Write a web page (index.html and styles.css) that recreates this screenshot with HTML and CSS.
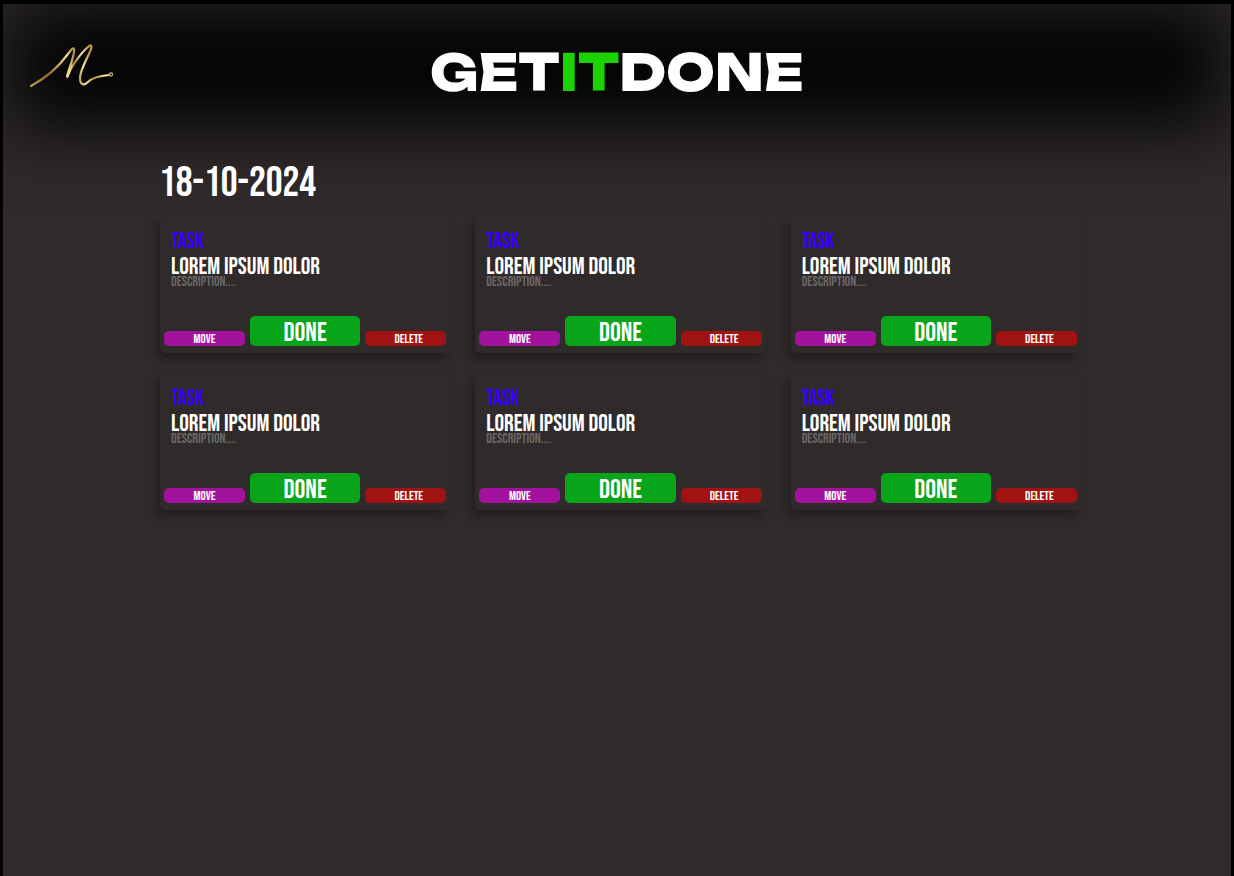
FILE: index.html
```html
<!DOCTYPE html>
<html lang="en">
<head>
<meta charset="utf-8">
<meta name="viewport" content="width=device-width, initial-scale=1">
<title>GetItDone</title>
<link rel="stylesheet" href="styles.css">
</head>
<body>
<div class="page">
  <header class="header">
    <a class="logo" href="#" aria-label="Home">
      <svg class="logo-mark" viewBox="0 0 84 44" fill="none" aria-hidden="true">
        <defs>
          <linearGradient id="gold" gradientUnits="userSpaceOnUse" x1="0" y1="42" x2="84" y2="30">
            <stop offset="0" stop-color="#c59b4f"/>
            <stop offset=".24" stop-color="#94692a"/>
            <stop offset=".48" stop-color="#f3df93"/>
            <stop offset=".56" stop-color="#b28a42"/>
            <stop offset=".66" stop-color="#f5e59b"/>
            <stop offset=".76" stop-color="#b99047"/>
            <stop offset=".9" stop-color="#f5e7a4"/>
            <stop offset="1" stop-color="#c7a860"/>
          </linearGradient>
        </defs>
        <g stroke="url(#gold)" stroke-width="2.200" stroke-linecap="round" stroke-linejoin="round">
          <path d="M1 42C14 35 27 25 38 10C41 6 43 3 44 5C45 11 39 25 37 32C37 34 38 32 39 29C42 21 52 8 58 3C61 0 62 2 61 5C58 14 50 25 50 34C50 41 54 42 58 38C62 34 67 32 79 31"/>
          <circle cx="81" cy="30.500" r="1.600" stroke-width="1.100"/>
        </g>
      </svg>
    </a>
    <h1 class="brand">GET<span class="brand-accent">IT</span>DONE</h1>
  </header>
  <main class="board">
    <h2 class="date">18-10-2024</h2>
    <div class="tasks">
      <article class="card"><p class="kind">TASK</p><h3 class="name">LOREM IPSUM DOLOR</h3><p class="description">DESCRIPTION....</p><div class="actions"><button class="button move">MOVE</button><button class="button done">DONE</button><button class="button delete">DELETE</button></div></article>
      <article class="card"><p class="kind">TASK</p><h3 class="name">LOREM IPSUM DOLOR</h3><p class="description">DESCRIPTION....</p><div class="actions"><button class="button move">MOVE</button><button class="button done">DONE</button><button class="button delete">DELETE</button></div></article>
      <article class="card"><p class="kind">TASK</p><h3 class="name">LOREM IPSUM DOLOR</h3><p class="description">DESCRIPTION....</p><div class="actions"><button class="button move">MOVE</button><button class="button done">DONE</button><button class="button delete">DELETE</button></div></article>
      <article class="card"><p class="kind">TASK</p><h3 class="name">LOREM IPSUM DOLOR</h3><p class="description">DESCRIPTION....</p><div class="actions"><button class="button move">MOVE</button><button class="button done">DONE</button><button class="button delete">DELETE</button></div></article>
      <article class="card"><p class="kind">TASK</p><h3 class="name">LOREM IPSUM DOLOR</h3><p class="description">DESCRIPTION....</p><div class="actions"><button class="button move">MOVE</button><button class="button done">DONE</button><button class="button delete">DELETE</button></div></article>
      <article class="card"><p class="kind">TASK</p><h3 class="name">LOREM IPSUM DOLOR</h3><p class="description">DESCRIPTION....</p><div class="actions"><button class="button move">MOVE</button><button class="button done">DONE</button><button class="button delete">DELETE</button></div></article>
    </div>
  </main>
</div>
</body>
</html>
```
FILE: styles.css
```css
* {
  box-sizing: border-box;
}

body {
  margin: 0;
  background: #000;
  color: #fff;
  font-family: "Bebas Neue", "Roboto Condensed", "Liberation Sans Narrow", "Liberation Sans", sans-serif;
}

h1, h2, h3, p {
  margin: 0;
}

.page {
  position: relative;
  min-height: 100vh;
  border: solid #000;
  border-width: 4px 3px 0;
  background: #2f2b2a;
  overflow: hidden;
  isolation: isolate;
}

.page::before {
  content: "";
  position: absolute;
  z-index: -1;
  inset: 0 6px auto;
  height: 124px;
  background: rgba(0, 0, 0, 0.92);
  filter: blur(36px);
}

.header {
  display: grid;
  grid-template-columns: 1fr auto 1fr;
  align-items: center;
  padding: 28px 27px 0;
}

.logo {
  justify-self: start;
  margin-bottom: 12px;
}

.logo-mark {
  display: block;
  width: 84px;
  height: 44px;
}

.brand {
  font-family: Unbounded, Inter, sans-serif;
  font-size: 50px;
  font-weight: 800;
  line-height: 80px;
}

.brand-accent {
  color: #1bd300;
}

.board {
  padding: 48px 150px 40px 156px;
}

.date {
  font-size: 42px;
  font-weight: 400;
  line-height: 48px;
}

.tasks {
  display: grid;
  grid-template-columns: repeat(3, 1fr);
  gap: 20px 25px;
  margin: 8px 0 0 1px;
}

.card {
  display: flex;
  flex-direction: column;
  padding: 14px 4px 7px;
  border-radius: 5px;
  background: #2f2b2a;
  box-shadow: -4px 6px 8px rgba(0, 0, 0, 0.3);
}

.kind,
.name,
.description {
  padding-left: 7px;
}

.kind {
  color: #3700ff;
  font-size: 22px;
  line-height: 24px;
}

.name {
  font-size: 24px;
  font-weight: 400;
  line-height: 26px;
}

.description {
  color: #6b6766;
  font-size: 14px;
  line-height: 4px;
}

.actions {
  display: grid;
  grid-template-columns: 81fr 110fr 81fr;
  gap: 5px;
  align-items: end;
  margin-top: 32px;
}

.button {
  height: 15px;
  padding: 1px 0 0;
  border: 0;
  border-radius: 5px;
  color: #fff;
  font-family: inherit;
  font-size: 13px;
  line-height: 15px;
  cursor: pointer;
}

.move {
  background: #a3129d;
}

.done {
  height: 30px;
  padding-top: 2px;
  background: #08a51b;
  font-size: 27px;
  line-height: 30px;
}

.delete {
  padding-left: 6px;
  background: #a11212;
}
```
